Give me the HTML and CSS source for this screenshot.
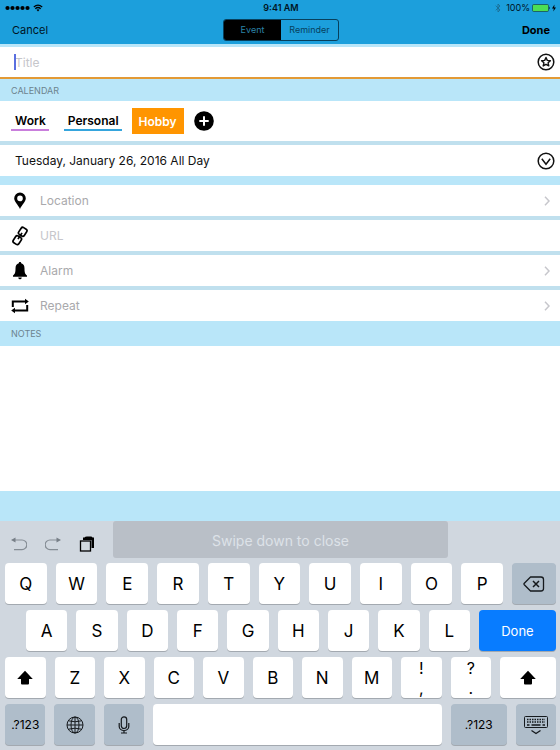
FILE: index.html
```
<!DOCTYPE html>
<html lang="en">
<head>
    <meta charset="UTF-8">
    <meta name="viewport" content="width=device-width, initial-scale=1.0">
    <title>New Event</title>
    <link rel="stylesheet" href="styles.css">
</head>
<body>
    <header class="header">
        <div class="status-bar">
            <div class="status-left">
                <svg width="26" height="6" viewBox="0 0 26 6"><circle cx="2.5" cy="3" r="2.1"/><circle cx="7.5" cy="3" r="2.1"/><circle cx="12.5" cy="3" r="2.1"/><circle cx="17.5" cy="3" r="2.1"/><circle cx="22.5" cy="3" r="2.1"/></svg>
                <svg width="10" height="8" viewBox="0 0 10 8" fill="none" stroke="#000" stroke-width="1.2"><path d="M.8 3Q5-.8 9.2 3M2.3 4.7Q5 2.3 7.7 4.7"/><path d="M3.5 5.8Q5 4.6 6.5 5.8L5 7.6z" fill="#000" stroke="none"/></svg>
            </div>
            <div class="status-time">9:41 AM</div>
            <div class="status-right">
                <svg class="bluetooth" width="6" height="10" viewBox="0 0 6 10" fill="none" stroke="#1b6d94" stroke-width=".9"><path d="M.8 2.7 5 7 3 9V1L5 3 .8 7.3"/></svg>
                <span>100%</span>
                <svg width="25" height="8" viewBox="0 0 25 8"><rect x=".5" y=".5" width="16" height="7" rx="1.2" fill="#4cde55" stroke="#123f50" stroke-width=".7"/><path d="M17.3 2.5q1.4 1.5 0 3z"/><path d="M22.5.5 20 4.5h1.8L21.3 7.5 24 3.5h-1.8z"/></svg>
            </div>
        </div>
        <nav class="nav-bar">
            <button class="nav-button">Cancel</button>
            <div class="segmented">
                <button class="active">Event</button>
                <button>Reminder</button>
            </div>
            <button class="nav-button done">Done</button>
        </nav>
    </header>

    <main class="form">
        <div class="title-row">
            <span class="caret"></span>
            <input type="text" placeholder="Title" aria-label="Title">
            <button class="icon-button" aria-label="Favorites">
                <svg width="18" height="18" viewBox="0 0 18 18" fill="none" stroke="#111" stroke-width="1.5"><circle cx="9" cy="9" r="7.8"/><path d="m9 4.5 1.3 2.9 3.1.3-2.3 2.1.7 3.1L9 11.3l-2.8 1.6.7-3.1-2.3-2.1 3.1-.3z" stroke-width="1.4" stroke-linejoin="round"/></svg>
            </button>
        </div>

        <h2 class="section-label">CALENDAR</h2>
        <div class="calendars">
            <button class="calendar work">Work</button>
            <button class="calendar personal">Personal</button>
            <button class="calendar hobby">Hobby</button>
            <button class="icon-button" aria-label="Add calendar">
                <svg width="20" height="20" viewBox="0 0 20 20"><circle cx="10" cy="10" r="9.8"/><path d="M10 5.3v9.4M5.3 10h9.4" stroke="#fff" stroke-width="2"/></svg>
            </button>
        </div>

        <button class="date-row">
            <span>Tuesday, January 26, 2016 All Day</span>
            <svg width="18" height="18" viewBox="0 0 18 18" fill="none" stroke="#111" stroke-width="1.5"><circle cx="9" cy="9" r="7.8"/><path d="m4.8 6.8 4.2 5.4 4.2-5.4"/></svg>
        </button>

        <div class="details">
            <button class="detail-row">
                <svg width="20" height="20" viewBox="0 0 20 20"><path fill-rule="evenodd" d="M10 1.5a5.8 5.8 0 0 0-5.8 5.8C4.2 11 8 13.5 10 18c2-4.5 5.8-7 5.8-10.7A5.8 5.8 0 0 0 10 1.500zm0 3.100a2.800 2.800 0 1 1 0 5.600 2.800 2.800 0 0 1 0-5.600z"/></svg>
                <span>Location</span>
                <svg class="chevron" width="6" height="10" viewBox="0 0 6 10"><path d="m1 .8 4 4.200-4 4.200"/></svg>
            </button>
            <label class="detail-row">
                <svg width="20" height="20" viewBox="0 0 20 20" fill="none" stroke="#000" stroke-width="1.7"><g transform="rotate(-57 10 10)"><rect x="1" y="6.700" width="8" height="6.600" rx="1.800"/><rect x="11" y="6.700" width="8" height="6.600" rx="1.800"/><path d="M6.300 10h7.400"/></g></svg>
                <input type="url" placeholder="URL" aria-label="URL">
            </label>
            <button class="detail-row">
                <svg width="20" height="20" viewBox="0 0 20 20"><path d="M10 1c.8 0 1.200.5 1.200 1.300C13.500 2.900 14.500 4.800 14.500 7.500c0 4 .5 5.500 2.500 7v1.300H3v-1.300c2-1.500 2.500-3 2.500-7 0-2.700 1-4.600 3.300-5.200C8.800 1.500 9.200 1 10 1zM8.200 16.400h3.600q-.3 1.900-1.800 1.900t-1.800-1.900z"/></svg>
                <span>Alarm</span>
                <svg class="chevron" width="6" height="10" viewBox="0 0 6 10"><path d="m1 .8 4 4.200-4 4.200"/></svg>
            </button>
            <button class="detail-row">
                <svg width="20" height="20" viewBox="0 0 20 20"><path d="M2.800 11V5.500H16M17.200 9v5.500H4" fill="none" stroke="#000" stroke-width="2"/><path d="m15 2.700 3.800 2.800L15 8.300zM5 11.700l-3.800 2.800L5 17.300z"/></svg>
                <span>Repeat</span>
                <svg class="chevron" width="6" height="10" viewBox="0 0 6 10"><path d="m1 .8 4 4.200-4 4.200"/></svg>
            </button>
        </div>

        <h2 class="section-label notes-label"><label for="notes">NOTES</label></h2>
        <textarea id="notes" class="notes"></textarea>
    </main>

    <section class="keyboard">
        <div class="keyboard-bar">
            <div class="shortcuts">
                <button class="icon-button" aria-label="Undo">
                    <svg width="16" height="16" viewBox="0 0 16 16" fill="none" stroke="#858d95" stroke-width="1.2"><path d="M2 4h9a4.800 4.800 0 0 1 0 9.600H3"/><path d="M4.500 1.500 0 4l4.500 2.500z" fill="#777f87" stroke="none"/></svg>
                </button>
                <button class="icon-button" aria-label="Redo">
                    <svg width="16" height="16" viewBox="0 0 16 16" fill="none" stroke="#858d95" stroke-width="1.2"><path d="M14 4H5a4.800 4.800 0 0 0 0 9.600h8"/><path d="M11.500 1.500 16 4l-4.500 2.500z" fill="#777f87" stroke="none"/></svg>
                </button>
                <button class="icon-button" aria-label="Paste">
                    <svg width="16" height="16" viewBox="0 0 16 16"><path d="M4 1.500h1.500Q6 .5 8 .5h4q1 0 1.500 1H15V12h-2.500V4H4z"/><rect x="1.500" y="5" width="10" height="10" fill="#d1d8df" stroke="#000" stroke-width="1.300"/></svg>
                </button>
            </div>
            <div class="swipe-hint">Swipe down to close</div>
        </div>
        <div class="keys">
            <div class="key-row">
                <button class="key">Q</button>
                <button class="key">W</button>
                <button class="key">E</button>
                <button class="key">R</button>
                <button class="key">T</button>
                <button class="key">Y</button>
                <button class="key">U</button>
                <button class="key">I</button>
                <button class="key">O</button>
                <button class="key">P</button>
                <button class="key dark backspace" aria-label="Backspace">
                    <svg width="22" height="16" viewBox="0 0 22 16" fill="none" stroke="#15191d" stroke-width="1.3"><path d="M7.500 1H18q2.500 0 2.500 2.500v9Q20.500 15 18 15H7.500L1.300 8.800q-.7-.8 0-1.600z" stroke-linejoin="round"/><path d="m10 5 6 6m0-6-6 6" stroke-width="1.5"/></svg>
                </button>
            </div>
            <div class="key-row indent">
                <button class="key">A</button>
                <button class="key">S</button>
                <button class="key">D</button>
                <button class="key">F</button>
                <button class="key">G</button>
                <button class="key">H</button>
                <button class="key">J</button>
                <button class="key">K</button>
                <button class="key">L</button>
                <button class="key return">Done</button>
            </div>
            <div class="key-row">
                <button class="key" aria-label="Shift">
                    <svg width="16" height="16" viewBox="0 0 16 16"><path d="M8 .8 15.800 9H12v4.500q0 1-1 1H5q-1 0-1-1V9H.2z"/></svg>
                </button>
                <button class="key">Z</button>
                <button class="key">X</button>
                <button class="key">C</button>
                <button class="key">V</button>
                <button class="key">B</button>
                <button class="key">N</button>
                <button class="key">M</button>
                <button class="key double"><span>!</span><span>,</span></button>
                <button class="key double"><span>?</span><span>.</span></button>
                <button class="key shift-right" aria-label="Shift">
                    <svg width="16" height="16" viewBox="0 0 16 16"><path d="M8 .8 15.800 9H12v4.500q0 1-1 1H5q-1 0-1-1V9H.2z"/></svg>
                </button>
            </div>
            <div class="key-row bottom">
                <button class="key dark">.?123</button>
                <button class="key dark" aria-label="Next keyboard">
                    <svg width="18" height="18" viewBox="0 0 18 18" fill="none" stroke="#15191d"><circle cx="9" cy="9" r="8"/><ellipse cx="9" cy="9" rx="4" ry="8"/><path d="M9 1v16M1 9h16M2.500 4.800q6.500 2 13 0M2.500 13.200q6.500-2 13 0"/></svg>
                </button>
                <button class="key dark" aria-label="Dictate">
                    <svg width="12" height="18" viewBox="0 0 12 18" fill="none" stroke="#15191d" stroke-width="1.2"><rect x="3.300" y=".8" width="5.400" height="11.700" rx="2.700"/><path d="M1.200 7v3.500a4.800 4 0 0 0 9.600 0V7M6 14.500V17M3 17h6"/></svg>
                </button>
                <button class="key space" aria-label="Space"></button>
                <button class="key dark symbols">.?123</button>
                <button class="key dark" aria-label="Hide keyboard">
                    <svg width="26" height="20" viewBox="0 0 26 20" fill="none" stroke="#15191d"><rect x="1.500" y="1.500" width="23" height="11" rx="1"/><path d="M4 4.500h18M4 7h18" stroke-width="1.5" stroke-dasharray="1.500 1"/><path d="M4 10h2.500M8.500 10h9M19.500 10H22" stroke-width="1.5"/><path d="m8.500 15.500 4.500 3 4.500-3" stroke-width="1.3"/></svg>
                </button>
            </div>
        </div>
    </section>
</body>
</html>
```
FILE: styles.css
```
* {
    box-sizing: border-box;
}
body {
    margin: 0;
    min-height: 100vh;
    display: flex;
    flex-direction: column;
    font-family: Inter, 'Liberation Sans', sans-serif;
    font-size: 12px;
    background-color: #b9e6f9;
    color: #111;
}
button, input, textarea {
    font: inherit;
    color: inherit;
    margin: 0;
    padding: 0;
    border: none;
    border-radius: 0;
    background: none;
    outline: none;
}
svg {
    display: block;
    flex-shrink: 0;
}
.icon-button {
    display: flex;
}

/* header */
.header {
    height: 44px;
    background-color: #1c9fdc;
    color: #00141f;
}
.status-bar {
    display: grid;
    grid-template-columns: 1fr auto 1fr;
    align-items: center;
    height: 15px;
    padding: 0 3px 0 5px;
    font-size: 9px;
}
.status-left, .status-right {
    display: flex;
    align-items: center;
    gap: 2px;
}
.status-right {
    justify-content: flex-end;
}
.bluetooth {
    margin-right: 3px;
}
.status-time {
    font-weight: 600;
}
.nav-bar {
    display: grid;
    grid-template-columns: 1fr auto 1fr;
    align-items: center;
    height: 29px;
    padding: 0 10px 0 12px;
}
.nav-button {
    justify-self: start;
    font-size: 11px;
}
.nav-button.done {
    justify-self: end;
    font-weight: 700;
    color: #000;
}
.segmented {
    display: flex;
    height: 22px;
    border: 1px solid #07405c;
    border-radius: 3px;
    overflow: hidden;
}
.segmented button {
    width: 57px;
    font-size: 9px;
    color: #07405c;
}
.segmented .active {
    background-color: #000;
    color: #2b83a8;
}

/* event form */
.form {
    flex: 1;
    display: flex;
    flex-direction: column;
    padding: 3px 0 30px;
}
.title-row {
    position: relative;
    display: flex;
    align-items: center;
    height: 32px;
    padding: 0 5px 0 15px;
    background-color: #fff;
    border-bottom: 2px solid #e39a35;
}
.title-row input {
    flex: 1;
    height: 30px;
}
.caret {
    position: absolute;
    left: 14px;
    top: 7px;
    width: 2px;
    height: 16px;
    background-color: #5a6fe0;
}
::placeholder {
    color: #c6c6cb;
    opacity: 1;
}
.section-label {
    display: flex;
    align-items: center;
    height: 22px;
    margin: 0;
    padding-left: 11px;
    font-size: 9px;
    font-weight: 400;
    color: #6c838e;
}
.notes-label {
    height: 25px;
}
.calendars {
    display: flex;
    align-items: center;
    gap: 10px;
    height: 40px;
    padding-left: 11px;
    background-color: #fff;
}
.calendar {
    height: 20px;
    padding: 0 3px 0 4px;
    font-weight: 600;
    color: #000;
}
.calendar.work {
    margin-right: 5px;
    border-bottom: 2px solid #c97fdc;
}
.calendar.personal {
    border-bottom: 2px solid #35a5dd;
}
.calendar.hobby {
    height: 26px;
    padding: 0 7px;
    background-color: #ff9500;
    color: #fff;
}
.date-row {
    display: flex;
    align-items: center;
    justify-content: space-between;
    height: 35px;
    padding: 0 5px 0 15px;
    border-top: 4px solid #c0e0ee;
    background-color: #fff;
}
.details {
    margin-top: 5px;
}
.detail-row {
    display: flex;
    align-items: center;
    gap: 10px;
    width: 100%;
    height: 35px;
    padding: 0 10px;
    border-top: 4px solid #c0e0ee;
    background-color: #fff;
    color: #a9a9ac;
    text-align: left;
}
.detail-row:first-child {
    border-top-color: #b9e6f9;
}
.detail-row span, .detail-row input {
    flex: 1;
}
.chevron {
    fill: none;
    stroke: #c7c7cc;
    stroke-width: 1.5;
}
.notes {
    flex: 1;
    min-height: 80px;
    padding: 8px 15px;
    background-color: #fff;
    resize: none;
}

/* keyboard */
.keyboard {
    padding: 0 4px 5px 5px;
    background-color: #d0d7df;
}
.keyboard-bar {
    display: grid;
    grid-template-columns: 10fr 31fr 10fr;
    height: 42px;
}
.shortcuts {
    display: flex;
    align-items: center;
    gap: 18px;
    padding: 4px 0 0 6px;
}
.swipe-hint {
    height: 37px;
    border-radius: 3px;
    background-color: #b9bfc7;
    color: #dde2e8;
    font-size: 14px;
    line-height: 40px;
    text-align: center;
}
.keys {
    display: flex;
    flex-direction: column;
    gap: 6px;
}
.key-row {
    display: flex;
    gap: 9px;
}
.key-row.indent {
    padding-left: 21px;
}
.key {
    flex: 1 1 0;
    display: flex;
    align-items: center;
    justify-content: center;
    min-width: 0;
    height: 41px;
    border-radius: 4px;
    background-color: #fff;
    box-shadow: 0 1px 0 #a3a9b0;
    font-size: 17px;
    color: #000;
}
.key.dark {
    background-color: #afbdca;
    font-size: 12px;
}
.key.backspace {
    flex: 0 0 44px;
}
.key.return {
    flex: 0 0 77px;
    background-color: #087cff;
    color: #fff;
    font-size: 13px;
}
.key.double {
    flex-direction: column;
    font-size: 16px;
    line-height: 20px;
}
.key.shift-right {
    flex: 0 0 56px;
}
.bottom .key {
    flex-grow: 8;
}
.bottom .space {
    flex-grow: 57;
}
.bottom .symbols {
    flex-grow: 11;
}
```
